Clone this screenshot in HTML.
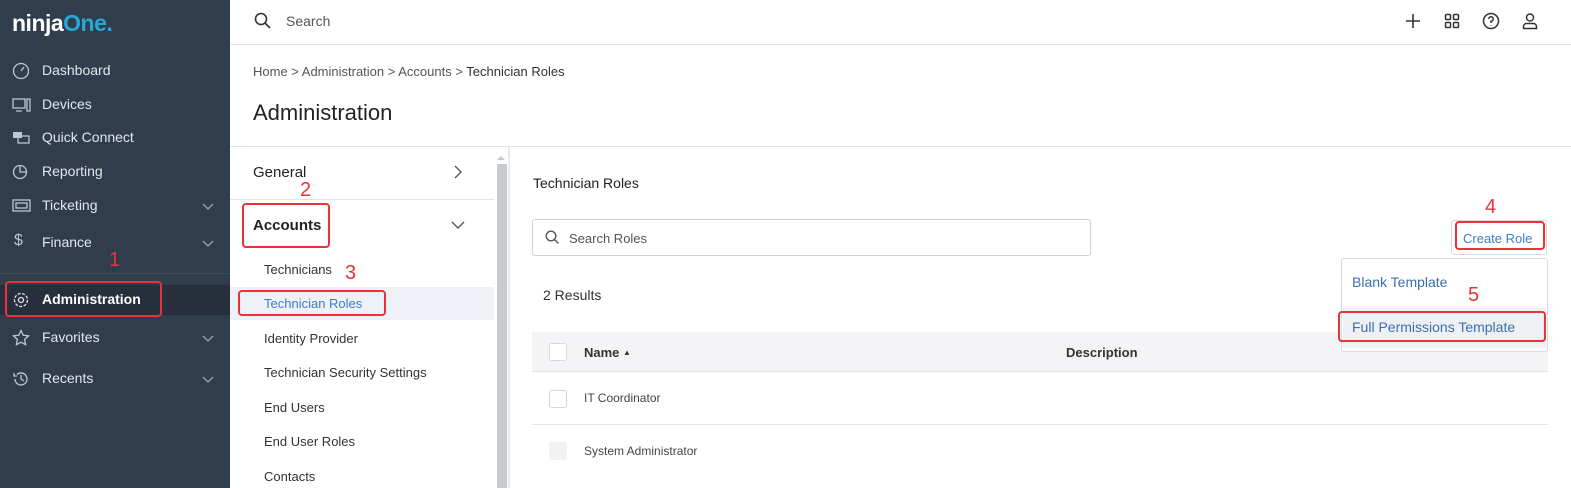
<!DOCTYPE html>
<html><head><meta charset="utf-8"><style>
*{box-sizing:border-box;margin:0;padding:0}
body{width:1571px;height:488px;overflow:hidden;font-family:"Liberation Sans",sans-serif;background:#fff;position:relative;color:#333}
.a{position:absolute}
.sb{left:0;top:0;width:230px;height:488px;background:#2f3d4d}
.ni{position:absolute;left:0;width:230px;color:#e3e7ec;font-size:14px}
.ni span{position:absolute;left:42px}
.ni svg{position:absolute;left:12px}
.ni .chev{position:absolute;left:202px;top:2px}
.red{position:absolute;border:2px solid #e8333a;border-radius:4px}
.rn{position:absolute;color:#e8333a;font-size:20px}
.sub{position:absolute;left:264px;font-size:13px;color:#333}
</style></head><body>
<div class="a sb">
  <div class="a" style="left:12px;top:10px;font-size:23px;font-weight:bold;color:#fff;letter-spacing:-0.5px">ninja<span style="color:#26a9d6">One</span><span style="color:#26a9d6">.</span></div>
  <div class="ni" style="top:62px"><svg width="18" height="18" viewBox="0 0 18 18" fill="none" stroke="#bfc6cf" stroke-width="1.3"><circle cx="9" cy="9" r="7.5"/><path d="M9 9l3-4"/></svg><span>Dashboard</span></div>
  <div class="ni" style="top:96px"><svg width="20" height="18" viewBox="0 0 20 18" fill="none" stroke="#bfc6cf" stroke-width="1.3"><rect x="1" y="3" width="12" height="9"/><path d="M4 15h6M15 3h3v12h-3z"/></svg><span>Devices</span></div>
  <div class="ni" style="top:129px"><svg width="20" height="18" viewBox="0 0 20 18" fill="#bfc6cf"><rect x="1" y="3" width="9" height="6"/><rect x="6" y="7" width="11" height="7" fill="none" stroke="#bfc6cf" stroke-width="1.3"/></svg><span>Quick Connect</span></div>
  <div class="ni" style="top:163px"><svg width="18" height="18" viewBox="0 0 18 18" fill="none" stroke="#bfc6cf" stroke-width="1.3"><circle cx="8" cy="9" r="6.5"/><path d="M8 3v6h6"/></svg><span>Reporting</span></div>
  <div class="ni" style="top:197px"><svg width="20" height="18" viewBox="0 0 20 18" fill="none" stroke="#bfc6cf" stroke-width="1.3"><rect x="1" y="3" width="17" height="11"/><rect x="4" y="6" width="11" height="5"/></svg><span>Ticketing</span><svg class="chev" width="12" height="14" viewBox="0 0 12 14" fill="none" stroke="#9aa3ad" stroke-width="1.3"><path d="M1 5l5 5 5-5"/></svg></div>
  <div class="ni" style="top:234px"><span style="left:14px;color:#bfc6cf;font-size:16px;top:-2px">$</span><span>Finance</span><svg class="chev" width="12" height="14" viewBox="0 0 12 14" fill="none" stroke="#9aa3ad" stroke-width="1.3"><path d="M1 5l5 5 5-5"/></svg></div>
  <div class="a" style="left:0;top:273px;width:230px;height:1px;background:#3d4b5b"></div>
  <div class="a" style="left:0;top:285px;width:230px;height:30px;background:#262f3b"></div>
  <div class="ni" style="top:291px;color:#fff;font-weight:bold"><svg width="18" height="18" viewBox="0 0 18 18" fill="none" stroke="#dfe3e8" stroke-width="1.3"><circle cx="9" cy="9" r="2.5"/><circle cx="9" cy="9" r="6.5" stroke-dasharray="3 1.5"/></svg><span>Administration</span></div>
  <div class="red" style="left:5px;top:281px;width:157px;height:36px"></div>
  <div class="rn" style="left:109px;top:249px">1</div>
  <div class="ni" style="top:329px"><svg width="18" height="18" viewBox="0 0 18 18" fill="none" stroke="#bfc6cf" stroke-width="1.3"><path d="M9 1.5l2.3 4.8 5.2.6-3.9 3.6 1 5.2L9 13.2l-4.6 2.5 1-5.2L1.5 6.9l5.2-.6z"/></svg><span>Favorites</span><svg class="chev" width="12" height="14" viewBox="0 0 12 14" fill="none" stroke="#9aa3ad" stroke-width="1.3"><path d="M1 5l5 5 5-5"/></svg></div>
  <div class="ni" style="top:370px"><svg width="18" height="18" viewBox="0 0 18 18" fill="none" stroke="#bfc6cf" stroke-width="1.3"><path d="M3 9a6 6 0 1 0 2-4.5M2 3v3h3M9 5v4l3 2"/></svg><span>Recents</span><svg class="chev" width="12" height="14" viewBox="0 0 12 14" fill="none" stroke="#9aa3ad" stroke-width="1.3"><path d="M1 5l5 5 5-5"/></svg></div>
</div>

<svg class="a" style="left:254px;top:12px" width="18" height="18" viewBox="0 0 18 18" fill="none" stroke="#333" stroke-width="1.6"><circle cx="7" cy="7" r="5.5"/><path d="M11 11l5 5"/></svg>
<div class="a" style="left:286px;top:13px;font-size:14px;color:#555">Search</div>
<svg class="a" style="left:1405px;top:13px" width="16" height="16" viewBox="0 0 16 16" stroke="#333" stroke-width="1.6"><path d="M8 1v14M1 8h14"/></svg>
<svg class="a" style="left:1444px;top:13px" width="16" height="16" viewBox="0 0 16 16" fill="none" stroke="#333" stroke-width="1.5"><rect x="1.5" y="1.5" width="5" height="5" rx="1"/><rect x="9.5" y="1.5" width="5" height="5" rx="1"/><rect x="1.5" y="9.5" width="5" height="5" rx="1"/><rect x="9.5" y="9.5" width="5" height="5" rx="1"/></svg>
<svg class="a" style="left:1482px;top:12px" width="18" height="18" viewBox="0 0 18 18" fill="none" stroke="#333" stroke-width="1.5"><circle cx="9" cy="9" r="7.5"/><path d="M6.8 7a2.2 2.2 0 1 1 2.2 2.2V11M9 13v.5"/></svg>
<svg class="a" style="left:1521px;top:12px" width="18" height="18" viewBox="0 0 18 18" fill="none" stroke="#333" stroke-width="1.5"><circle cx="9" cy="5.5" r="3.5"/><path d="M2.5 16.5v-2a3 3 0 0 1 3-3h7a3 3 0 0 1 3 3v2z"/></svg>
<div class="a" style="left:230px;top:44px;width:1341px;height:1px;background:#e2e4e8"></div>

<div class="a" style="left:253px;top:64px;font-size:13px;color:#555">Home &gt; Administration &gt; Accounts &gt; <span style="color:#333">Technician Roles</span></div>
<div class="a" style="left:253px;top:100px;font-size:22px;color:#222">Administration</div>

<div class="a" style="left:230px;top:146px;width:1341px;height:1px;background:#e2e4e8"></div>
<div class="a" style="left:253px;top:164px;font-size:15px;color:#222">General</div>
<svg class="a" style="left:452px;top:164px" width="12" height="16" viewBox="0 0 12 16" fill="none" stroke="#555" stroke-width="1.4"><path d="M3 2l6 6-6 6"/></svg>
<div class="a" style="left:230px;top:199px;width:264px;height:1px;background:#e2e4e8"></div>
<div class="a" style="left:253px;top:217px;font-size:15px;color:#222;font-weight:bold">Accounts</div>
<svg class="a" style="left:450px;top:219px" width="16" height="12" viewBox="0 0 16 12" fill="none" stroke="#555" stroke-width="1.4"><path d="M2 3l6 6 6-6"/></svg>
<div class="red" style="left:242px;top:203px;width:88px;height:45px"></div>
<div class="rn" style="left:300px;top:179px">2</div>
<div class="sub" style="top:262px">Technicians</div>
<div class="rn" style="left:345px;top:262px">3</div>
<div class="a" style="left:230px;top:287px;width:264px;height:33px;background:#eef2f6"></div>
<div class="sub" style="top:296px;color:#3b7fc4">Technician Roles</div>
<div class="red" style="left:238px;top:290px;width:148px;height:26px"></div>
<div class="sub" style="top:331px">Identity Provider</div>
<div class="sub" style="top:365px">Technician Security Settings</div>
<div class="sub" style="top:400px">End Users</div>
<div class="sub" style="top:434px">End User Roles</div>
<div class="sub" style="top:469px">Contacts</div>
<div class="a" style="left:494px;top:147px;width:14px;height:341px;background:#fff"></div>
<div class="a" style="left:497px;top:164px;width:10px;height:324px;background:#c6cbd1"></div>
<div class="a" style="left:497px;top:152px;width:0;height:0;border:4px solid transparent;border-bottom-color:#c6cbd1"></div>
<div class="a" style="left:508px;top:147px;width:2px;height:341px;background:#e8eaee"></div>

<div class="a" style="left:533px;top:175px;font-size:14px;color:#222">Technician Roles</div>
<div class="a" style="left:532px;top:219px;width:559px;height:37px;border:1px solid #cfd3d9;border-radius:3px"></div>
<svg class="a" style="left:545px;top:230px" width="15" height="15" viewBox="0 0 15 15" fill="none" stroke="#555" stroke-width="1.4"><circle cx="6" cy="6" r="4.8"/><path d="M9.5 9.5l4 4"/></svg>
<div class="a" style="left:569px;top:231px;font-size:13px;color:#555">Search Roles</div>
<div class="a" style="left:543px;top:287px;font-size:14px;color:#333">2 Results</div>

<div class="a" style="left:1451px;top:220px;width:96px;height:35px;border:1px solid #d6dae0;border-radius:3px"></div>
<div class="a" style="left:1463px;top:231px;font-size:13px;color:#3b7fc4">Create Role</div>
<div class="red" style="left:1455px;top:221px;width:90px;height:29px"></div>
<div class="rn" style="left:1485px;top:196px">4</div>

<div class="a" style="left:532px;top:332px;width:1016px;height:40px;background:#f4f4f6;border-bottom:1px solid #e2e4e8"></div>
<div class="a" style="left:549px;top:343px;width:18px;height:18px;border:1px solid #d4d7dc;border-radius:3px;background:#fff"></div>
<div class="a" style="left:584px;top:345px;font-size:13px;color:#333;font-weight:bold">Name <span style="font-size:8px;vertical-align:2px">▲</span></div>
<div class="a" style="left:1066px;top:345px;font-size:13px;color:#333;font-weight:bold">Description</div>
<div class="a" style="left:549px;top:390px;width:18px;height:18px;border:1px solid #d4d7dc;border-radius:3px;background:#fff"></div>
<div class="a" style="left:584px;top:391px;font-size:12px;color:#444">IT Coordinator</div>
<div class="a" style="left:532px;top:424px;width:1016px;height:1px;background:#e2e4e8"></div>
<div class="a" style="left:549px;top:442px;width:18px;height:18px;border-radius:3px;background:#f1f2f4"></div>
<div class="a" style="left:584px;top:444px;font-size:12px;color:#444">System Administrator</div>

<div class="a" style="left:1341px;top:258px;width:207px;height:94px;background:#fff;border:1px solid #d6dae0;border-radius:3px"></div>
<div class="a" style="left:1343px;top:308px;width:203px;height:40px;background:#eef0f3"></div>
<div class="a" style="left:1352px;top:274px;font-size:14px;color:#3b6fb0">Blank Template</div>
<div class="a" style="left:1352px;top:319px;font-size:14px;color:#3b6fb0">Full Permissions Template</div>
<div class="red" style="left:1338px;top:311px;width:208px;height:31px"></div>
<div class="rn" style="left:1468px;top:284px">5</div>
</body></html>
